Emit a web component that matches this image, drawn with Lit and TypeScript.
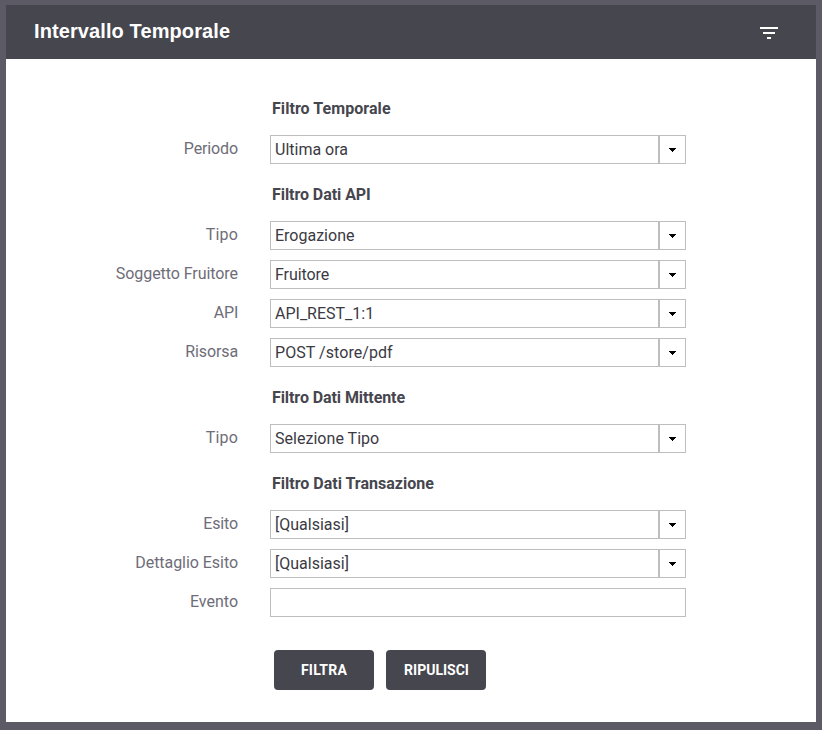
import { LitElement, html, css, svg } from "lit";
import { customElement, property } from "lit/decorators.js";
import { styleMap } from "lit/directives/style-map.js";

interface Field {
  label: string;
  value: string;
  select: boolean;
  labelTracking: number;
  valueTracking: number;
}

interface Section {
  title: string;
  tracking: number;
  fields: Field[];
}

const pick = (label: string, value: string, labelTracking = 0, valueTracking = 0): Field => ({
  label,
  value,
  select: true,
  labelTracking,
  valueTracking,
});

// Tracking values are in pixels per letter.
const SECTIONS: Section[] = [
  {
    title: "Filtro Temporale",
    tracking: 0.06,
    fields: [pick("Periodo", "Ultima ora", -0.12)],
  },
  {
    title: "Filtro Dati API",
    tracking: -0.06,
    fields: [
      pick("Tipo", "Erogazione", 0.2),
      pick("Soggetto Fruitore", "Fruitore", -0.06, -0.06),
      pick("API", "API_REST_1:1", -0.25),
      pick("Risorsa", "POST /store/pdf", -0.1, 0.06),
    ],
  },
  {
    title: "Filtro Dati Mittente",
    tracking: -0.08,
    fields: [pick("Tipo", "Selezione Tipo", 0.2, 0.03)],
  },
  {
    title: "Filtro Dati Transazione",
    tracking: 0,
    fields: [
      pick("Esito", "[Qualsiasi]", -0.15),
      pick("Dettaglio Esito", "[Qualsiasi]", -0.05),
      { label: "Evento", value: "", select: false, labelTracking: 0, valueTracking: 0 },
    ],
  },
];

const tracking = (px: number) => styleMap({ letterSpacing: `${px}px` });

const arrow = svg`<path d="M0 0h7v1h-1v1h-1v1h-1v1h-1v-1h-1v-1h-1v-1h-1z" fill="#000" />`;

@customElement("filter-field")
class FilterField extends LitElement {
  @property({ attribute: false }) field!: Field;

  static styles = css`
    :host {
      display: grid;
      grid-template-columns: 232px 416px;
      column-gap: 32px;
      height: 29px;
      margin-bottom: 10px;
    }
    .label {
      text-align: right;
      line-height: 27px;
      color: #6e6d78;
      white-space: nowrap;
    }
    .box {
      box-sizing: border-box;
      display: flex;
      height: 29px;
      border: 1px solid #bebebe;
      background: #fff;
    }
    .value {
      flex: 1;
      padding-left: 4px;
      line-height: 27px;
      color: #3b3a43;
      white-space: pre;
    }
    .toggle {
      box-sizing: border-box;
      width: 27px;
      border-left: 2px solid #bebebe;
      display: flex;
      justify-content: center;
      padding-top: 12px;
    }
    .arrow {
      display: block;
      width: 7px;
      height: 4px;
    }
  `;

  render() {
    const f = this.field;
    return html`
      <div class="label" style=${tracking(f.labelTracking)}>${f.label}</div>
      <div class="box">
        <div class="value" style=${tracking(f.valueTracking)}>${f.value}</div>
        ${f.select
          ? html`<div class="toggle">
              <svg class="arrow" viewBox="0 0 7 4" shape-rendering="crispEdges">${arrow}</svg>
            </div>`
          : null}
      </div>
    `;
  }
}

@customElement("app-root")
class AppRoot extends LitElement {
  static styles = css`
    :host {
      display: block;
      box-sizing: border-box;
      height: 730px;
      padding: 5px 6px 8px;
      background: #5c5b65;
      font: 16px Roboto, sans-serif;
    }
    .panel {
      height: 717px;
      background: #fff;
    }
    .header {
      box-sizing: border-box;
      display: flex;
      justify-content: space-between;
      height: 54px;
      padding: 0 38px 0 28px;
      background: #46464e;
      color: #fff;
    }
    .heading {
      font: bold 20px/52px "Liberation Sans", sans-serif;
      letter-spacing: 0.1px;
    }
    .icon {
      display: block;
      width: 18px;
      height: 12px;
      margin-top: 22px;
    }
    .form {
      padding-top: 29px;
    }
    .title {
      height: 47px;
      padding-left: 266px;
      line-height: 41px;
      font-weight: bold;
      color: #46464e;
    }
    .actions {
      display: flex;
      gap: 12px;
      padding: 23px 0 0 268px;
    }
    .button {
      width: 100px;
      height: 40px;
      padding: 0;
      border: 0;
      border-radius: 4px;
      background: #46464e;
      color: #fff;
      font: bold 14px/40px Roboto, sans-serif;
      text-align: center;
    }
    .apply {
      letter-spacing: 0.2px;
    }
    .reset {
      padding-left: 1px;
    }
  `;

  render() {
    return html`
      <div class="panel">
        <div class="header">
          <div class="heading">Intervallo Temporale</div>
          <svg class="icon" viewBox="0 0 18 12" shape-rendering="crispEdges">
            <path d="M0 0h18v2H0zM3 5h12v2H3zM7 10h4v2H7z" fill="#fff" />
          </svg>
        </div>
        <div class="form">
          ${SECTIONS.map(
            (section) => html`
              <div class="title" style=${tracking(section.tracking)}>${section.title}</div>
              ${section.fields.map((f) => html`<filter-field .field=${f}></filter-field>`)}
            `
          )}
          <div class="actions">
            <button class="button apply">FILTRA</button>
            <button class="button reset">RIPULISCI</button>
          </div>
        </div>
      </div>
    `;
  }
}
